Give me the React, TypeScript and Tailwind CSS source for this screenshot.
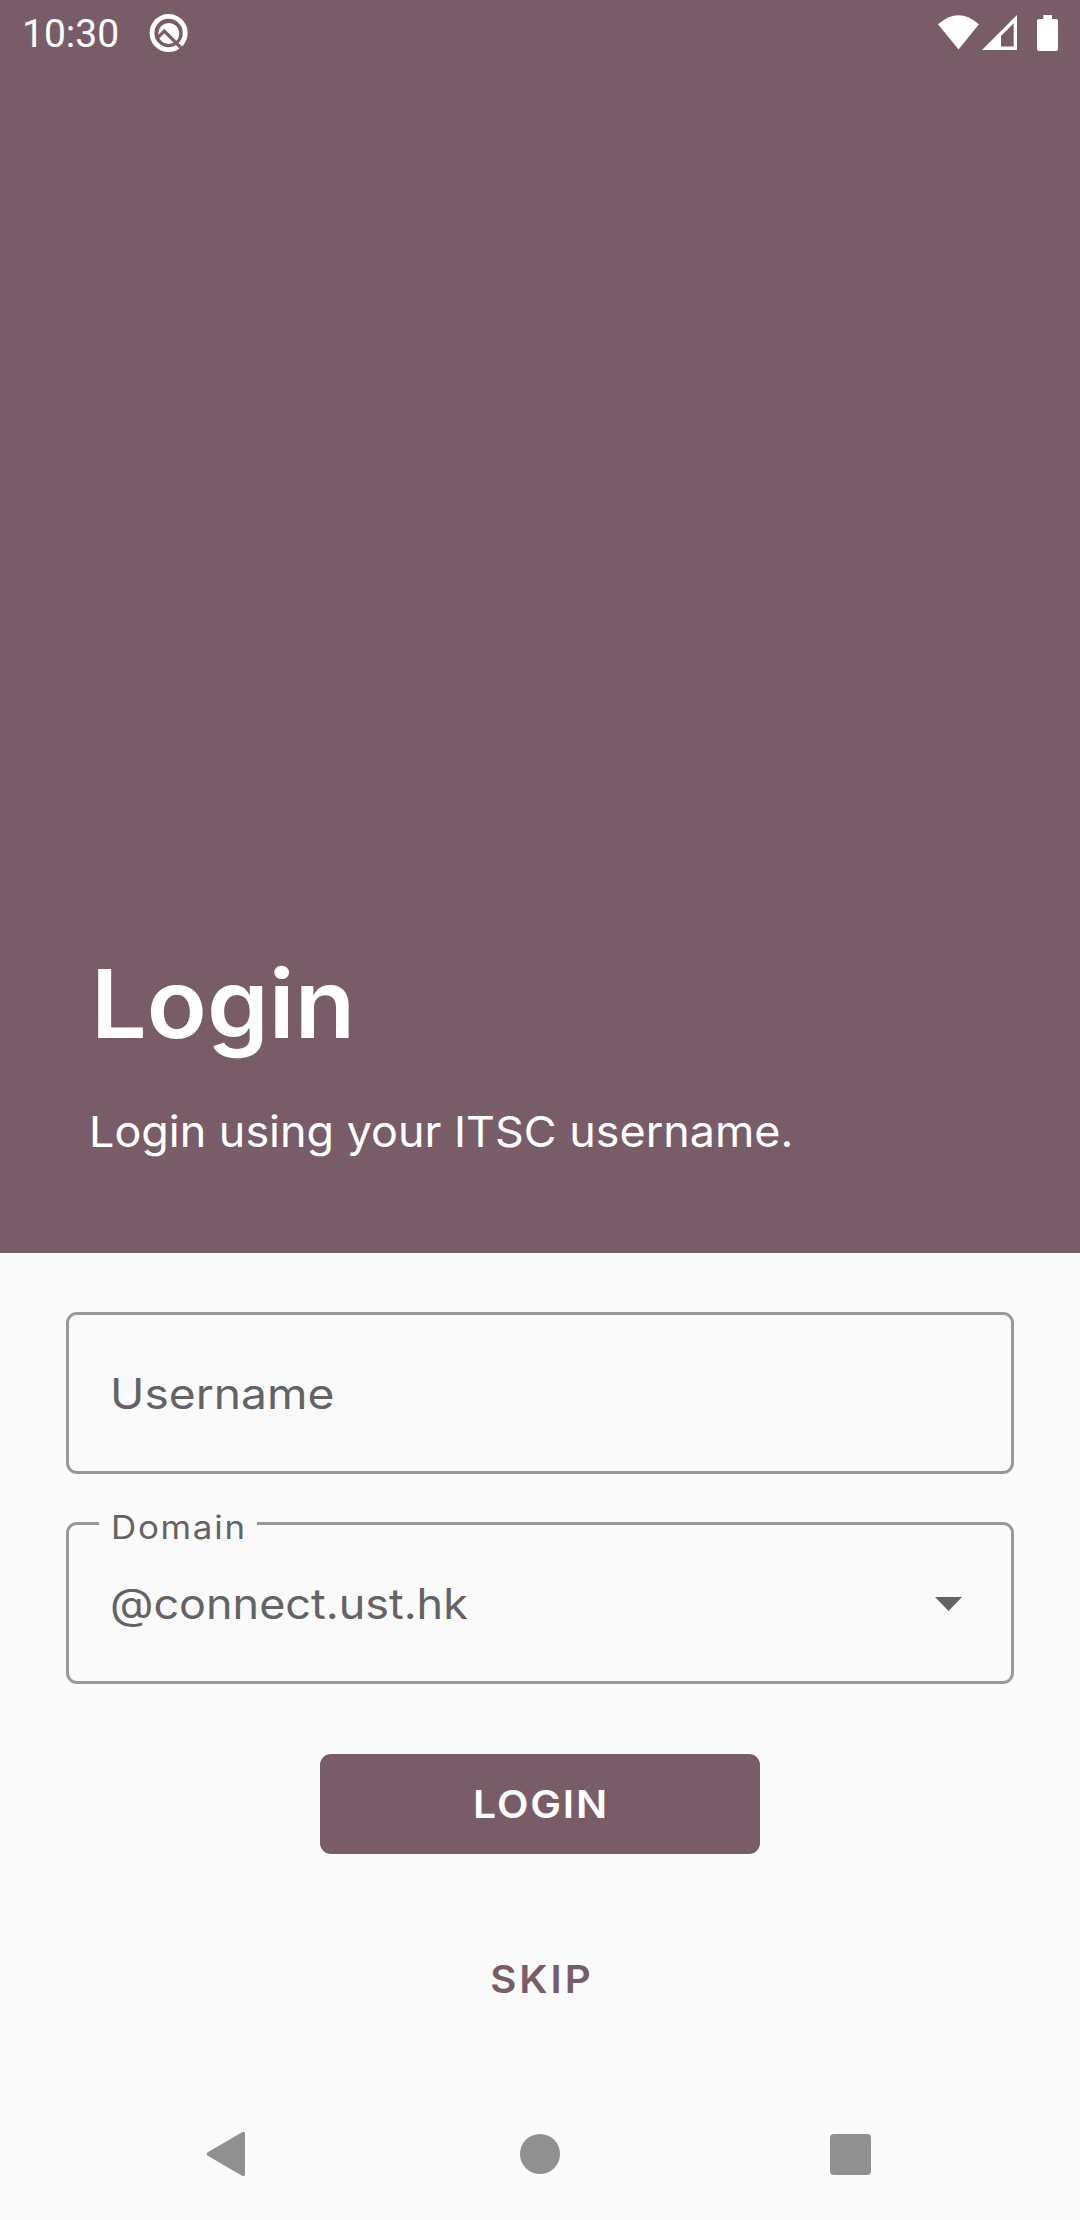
function StatusBar() {
  return (
    <div className="flex h-[66px] items-start justify-between pr-[22px] pl-[22px] text-white">
      <div className="flex items-start">
        <span className="mt-[11px] w-[127px] font-['Roboto',sans-serif] text-[39px] leading-[46px]">10:30</span>
        <svg className="mt-[13px] h-10 w-10" viewBox="0 0 40 40" fill="none">
          <circle cx="19.6" cy="20" r="16.6" stroke="currentColor" strokeWidth="4.8" />
          <circle cx="19.8" cy="20.5" r="10.5" fill="currentColor" />
          <path d="M7.2 26.2L15.3 18.1L38 40.8" stroke="#785d69" strokeWidth="3.3" />
        </svg>
      </div>
      <div className="flex pt-[15px]">
        <svg className="h-[35px] w-[41px]" viewBox="0 0 41 35">
          <path d="M0 9.3Q20.5 -9 41 9.3L20.5 34.5Z" fill="currentColor" />
        </svg>
        <svg className="ml-[3px] h-[35px] w-[35px]" viewBox="0 0 35 35">
          <path fillRule="evenodd" d="M35 0V35H0ZM31.7 8.3L19 21V31.4H31.7Z" fill="currentColor" />
        </svg>
        <svg className="ml-5 h-9 w-[21px]" viewBox="0 0 21 36">
          <path d="M6.3 0h8.7v4h4a2 2 0 0 1 2 2v28a2 2 0 0 1-2 2H2a2 2 0 0 1-2-2V6a2 2 0 0 1 2-2h4.3z" fill="currentColor" />
        </svg>
      </div>
    </div>
  );
}

function NavigationBar() {
  return (
    <nav className="flex h-[132px] items-center justify-between pr-[209px] pl-[206px] text-[#909090]">
      <svg className="h-[46px] w-10" viewBox="0 0 40 46">
        <path d="M36 1.2Q39 -.2 39 3V43Q39 46.2 36 44.8L1.8 24.8Q-.4 23 1.8 21.2Z" fill="currentColor" />
      </svg>
      <div className="mr-[-4px] h-10 w-10 rounded-full bg-[#909090]" />
      <div className="h-[41px] w-[41px] rounded-[4px] bg-[#909090]" />
    </nav>
  );
}

export default function App() {
  return (
    <div className="flex h-[2220px] w-[1080px] flex-col bg-[#fafafa] font-['Inter',sans-serif]">
      <header className="flex h-[1253px] flex-col justify-between bg-[#785d69] text-white">
        <StatusBar />
        <div className="pb-24">
          <h1 className="ml-[91px] w-fit origin-left scale-x-[1.04] text-[95px] leading-[115px] font-semibold">Login</h1>
          <p className="mt-11 ml-[89px] w-fit origin-left scale-x-[1.044] text-[43px] leading-[52px] whitespace-nowrap">Login using your ITSC username.</p>
        </div>
      </header>
      <main className="flex flex-1 flex-col items-center pt-[59px]">
        <div className="flex h-[162px] w-[948px] items-center rounded-[11px] border-[3px] border-[#999999] pl-[41px] text-[#636363]">
          <span className="origin-left scale-x-[1.1] text-[42px]">Username</span>
        </div>
        <div className="relative mt-12 flex h-[162px] w-[948px] items-center justify-between rounded-[11px] border-[3px] border-[#999999] pr-[49px] pl-[41px] text-[#636363]">
          <div className="absolute -top-[17px] left-[30px] w-[158px] bg-[#fafafa] pl-3">
            <span className="block w-fit origin-left scale-x-[1.09] text-[32px] leading-[40px] tracking-[1.6px]">Domain</span>
          </div>
          <span className="origin-left scale-x-[1.07] text-[42px]">@connect.ust.hk</span>
          <svg className="mt-[2px] h-[14px] w-[27px]" viewBox="0 0 27 14">
            <path d="M0 0H27L13.5 14Z" fill="currentColor" />
          </svg>
        </div>
        <button className="mt-[70px] h-[100px] w-[440px] rounded-[11px] bg-[#785d69] text-[38px] font-semibold text-white">
          <span className="inline-block scale-x-[1.08] pl-[2px] tracking-[1.7px]">LOGIN</span>
        </button>
        <button className="mt-[75px] h-[100px] w-[440px] text-[38px] font-semibold text-[#785d69]">
          <span className="inline-block scale-x-[1.06] pl-[3px] tracking-[2.8px]">SKIP</span>
        </button>
      </main>
      <NavigationBar />
    </div>
  );
}
